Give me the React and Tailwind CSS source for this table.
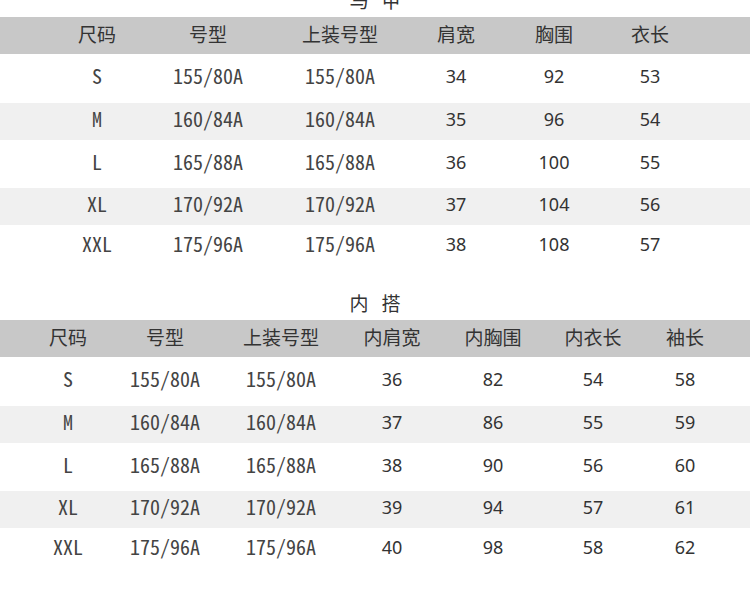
const rowHeights = ['h-[49px]', 'h-[37px]', 'h-[48px]', 'h-[37px]', 'h-[42px]'];

const vest = {
  title: ['马', '甲'],
  pad: 'pl-[42px]',
  cols: 'grid-cols-[110px_112px_152px_80px_116px_76px]',
  head: ['尺码', '号型', '上装号型', '肩宽', '胸围', '衣长'],
  rows: [
    ['S', '155/80A', '155/80A', '34', '92', '53'],
    ['M', '160/84A', '160/84A', '35', '96', '54'],
    ['L', '165/88A', '165/88A', '36', '100', '55'],
    ['XL', '170/92A', '170/92A', '37', '104', '56'],
    ['XXL', '175/96A', '175/96A', '38', '108', '57'],
  ],
};

const inner = {
  title: ['内', '搭'],
  pad: 'pl-[20px]',
  cols: 'grid-cols-[96px_98px_134px_88px_114px_86px_98px]',
  head: ['尺码', '号型', '上装号型', '内肩宽', '内胸围', '内衣长', '袖长'],
  rows: [
    ['S', '155/80A', '155/80A', '36', '82', '54', '58'],
    ['M', '160/84A', '160/84A', '37', '86', '55', '59'],
    ['L', '165/88A', '165/88A', '38', '90', '56', '60'],
    ['XL', '170/92A', '170/92A', '39', '94', '57', '61'],
    ['XXL', '175/96A', '175/96A', '40', '98', '58', '62'],
  ],
};

const cjk = "font-['Noto_Sans_CJK_SC',sans-serif]";
const mono = "font-['Noto_Sans_Mono_CJK_SC','Noto_Sans_CJK_SC',monospace]";
const num = "font-['Noto_Sans',sans-serif]";

function SizeTable({ table, className }) {
  return (
    <section className={className}>
      <div className={`h-[34px] flex items-center justify-center gap-[13px] text-[19px] text-[#333] ${cjk}`}>
        {table.title.map((t) => (
          <span key={t}>{t}</span>
        ))}
      </div>
      <div className={`h-[37px] pb-[4px] bg-[#c8c8c8] grid items-center ${table.pad} ${table.cols}`}>
        {table.head.map((h) => (
          <div key={h} className={`text-center text-[19px] leading-none text-[#333] ${cjk}`}>
            {h}
          </div>
        ))}
      </div>
      {table.rows.map((row, i) => (
        <div
          key={row[0]}
          className={`grid items-center pb-[5px] ${table.pad} ${table.cols} ${rowHeights[i]} ${i % 2 ? 'bg-[#f0f0f0]' : 'bg-white'}`}
        >
          {row.map((cell, j) => (
            <div
              key={j}
              className={`text-center leading-none ${j < 3 ? `text-[20px] text-[#444] ${mono}` : `text-[18px] text-[#333] ${num}`}`}
            >
              {cell}
            </div>
          ))}
        </div>
      ))}
    </section>
  );
}

export default function App() {
  return (
    <div className="w-[750px] h-[592px] overflow-hidden bg-white">
      <SizeTable table={vest} className="-mt-[17px]" />
      <SizeTable table={inner} className="mt-[19px]" />
    </div>
  );
}
